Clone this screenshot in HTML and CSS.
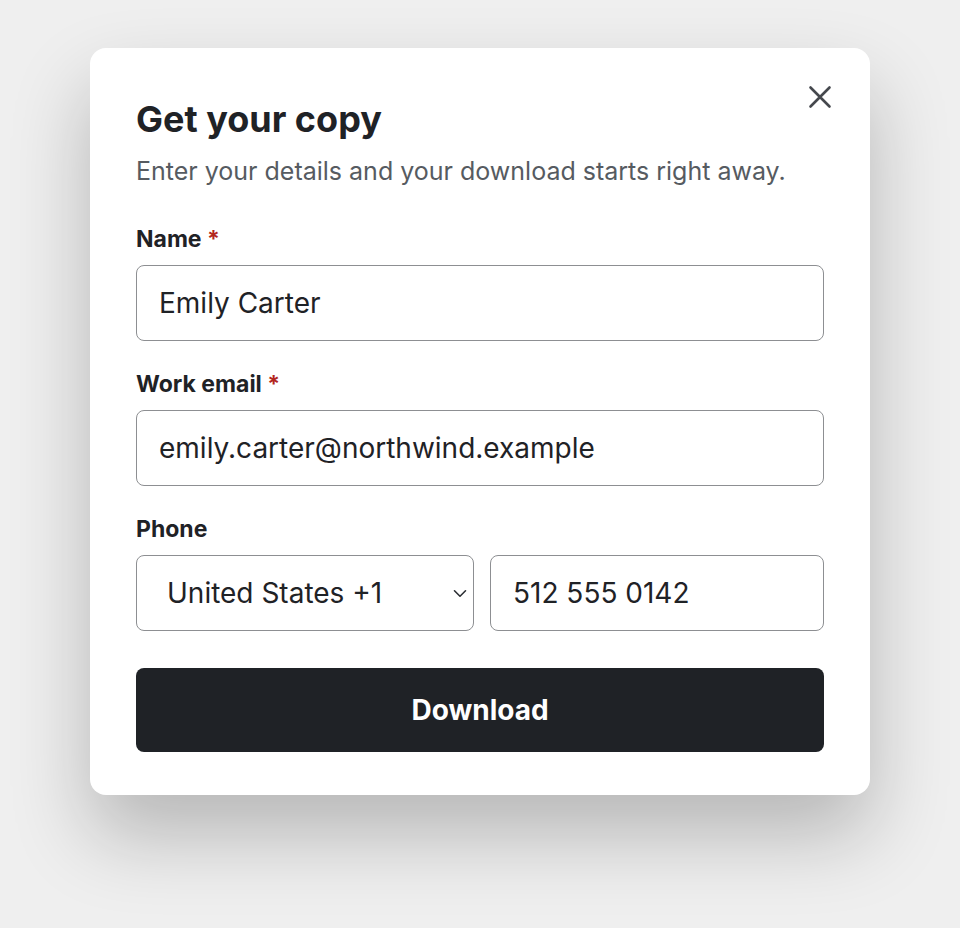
FILE: index.html
```html
<!DOCTYPE html>
<html lang="en">
<head>
    <meta charset="UTF-8">
    <meta name="viewport" content="width=device-width, initial-scale=1.0">
    <title>Get your copy</title>
    <link rel="stylesheet" href="styles.css">
</head>
<body>
    <div class="modal">
        <button class="close" type="button" aria-label="Close">
            <svg width="24" height="24" viewBox="0 0 24 24" fill="none" stroke="currentColor" stroke-width="2.6" stroke-linecap="round">
                <path d="M2.5 2.5 L21.5 21.5 M21.5 2.5 L2.5 21.5"/>
            </svg>
        </button>
        <h1 class="title">Get your copy</h1>
        <p class="sub">Enter your details and your download starts right away.</p>

        <form class="form">
            <div class="field">
                <label class="label" for="name">Name <span class="req">*</span></label>
                <input class="input" id="name" type="text" value="Emily Carter">
            </div>
            <div class="field">
                <label class="label" for="email">Work email <span class="req">*</span></label>
                <input class="input" id="email" type="email" value="emily.carter@northwind.example">
            </div>
            <div class="field">
                <label class="label" for="phone">Phone</label>
                <div class="phone">
                    <div class="select-wrap">
                        <select class="input select" aria-label="Country code">
                            <option>United States +1</option>
                        </select>
                        <!-- 下拉箭头 -->
                        <svg class="chevron" width="14" height="9" viewBox="0 0 14 9" fill="none" stroke="currentColor" stroke-width="1.6" stroke-linecap="round" stroke-linejoin="round">
                            <path d="M1.5 1.8 L7 7.2 L12.5 1.8"/>
                        </svg>
                    </div>
                    <input class="input tel" id="phone" type="tel" value="512 555 0142">
                </div>
            </div>
            <button class="btn" type="button">Download</button>
        </form>
    </div>
</body>
</html>
```

FILE: styles.css
```css
/* 页面底色 */
body {
    margin: 0;
    min-height: 928px;
    background-color: #efefef;
    font-family: Inter, "Noto Sans", sans-serif;
    color: #1f2226;
}

/* 弹窗卡片 */
.modal {
    position: relative;
    box-sizing: border-box;
    width: 780px;
    margin: 48px 0 0 90px;
    padding: 50px 46px 43px;
    background-color: #fff;
    border-radius: 16px;
    box-shadow: 0 40px 80px rgba(0, 0, 0, 0.24);
}

.close {
    position: absolute;
    top: 37px;
    right: 38px;
    width: 24px;
    height: 24px;
    padding: 0;
    border: 0;
    background: none;
    color: #45484d;
}

.close svg {
    display: block;
}

.title {
    margin: 0;
    font-size: 36px;
    line-height: 42px;
    font-weight: 700;
}

.sub {
    margin: 16px 0 0;
    font-size: 25px;
    line-height: 30px;
    color: #565b61;
}

.form {
    margin-top: 41px;
}

.field {
    margin-bottom: 31px;
}

.label {
    display: block;
    margin-bottom: 14px;
    font-size: 23px;
    line-height: 24px;
    font-weight: 700;
}

.req {
    color: #b3261e;
}

.input {
    display: block;
    box-sizing: border-box;
    width: 100%;
    height: 76px;
    padding: 0 22px;
    border: 1.5px solid #8d8f92;
    border-radius: 8px;
    background-color: #fff;
    font-family: inherit;
    font-size: 28px;
    color: #1f2226;
}

.phone {
    display: flex;
    gap: 16px;
}

.select-wrap {
    position: relative;
    flex: none;
    width: 338px;
}

.select {
    appearance: none;
    padding-left: 30px;
    padding-right: 40px;
}

.chevron {
    position: absolute;
    top: 34px;
    right: 7px;
    color: #2b2e33;
    pointer-events: none;
}

.tel {
    flex: 1;
}

.btn {
    display: block;
    width: 100%;
    height: 84px;
    margin-top: 37px;
    border: 0;
    border-radius: 8px;
    background-color: #1f2226;
    color: #fff;
    font-family: inherit;
    font-size: 28px;
    font-weight: 700;
}
```
